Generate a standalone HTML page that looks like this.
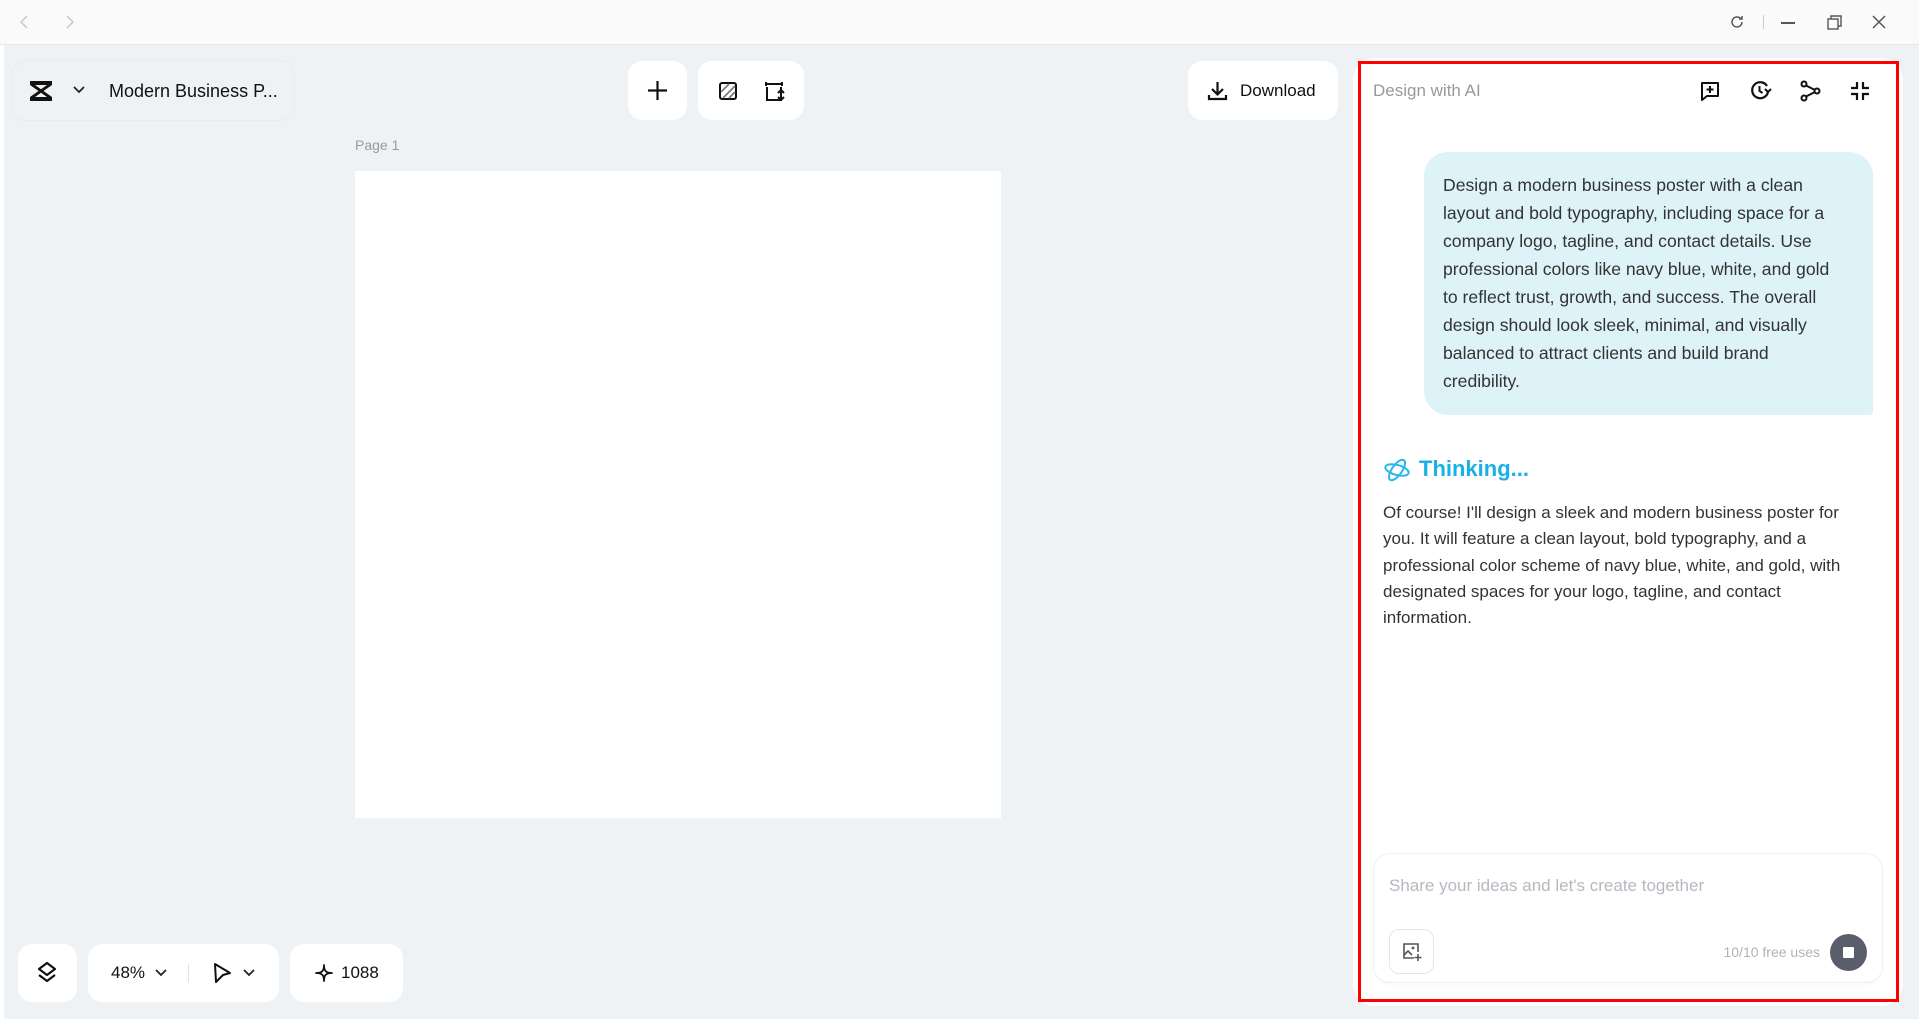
<!DOCTYPE html>
<html><head><meta charset="utf-8"><style>
*{box-sizing:border-box;margin:0;padding:0}
body{width:1919px;height:1019px;overflow:hidden;background:#eef2f5;font-family:"Liberation Sans",sans-serif;position:relative;color:#222}
.abs{position:absolute}
.top{left:0;top:0;width:1919px;height:45px;background:#fafafa;border-bottom:1px solid #e6e8ea}
.card{background:#fff;border-radius:14px;position:absolute}
svg{display:block}
.t{font-size:17.6px;line-height:28px;color:#333}
</style></head><body>
<div class="abs top">
<svg class="abs" style="left:18px;top:14px" width="12" height="16" viewBox="0 0 12 16"><path d="M9 2L3 8l6 6" fill="none" stroke="#c8c8c8" stroke-width="1.5"/></svg>
<svg class="abs" style="left:64px;top:14px" width="12" height="16" viewBox="0 0 12 16"><path d="M3 2l6 6-6 6" fill="none" stroke="#c8c8c8" stroke-width="1.5"/></svg>
<svg class="abs" style="left:1729px;top:14px" width="16" height="16" viewBox="0 0 16 16"><path d="M13 8a5 5 0 1 1-1.5-3.6M13 2v3h-3" fill="none" stroke="#555" stroke-width="1.5"/></svg>
<div class="abs" style="left:1763px;top:15px;width:1px;height:14px;background:#ccc"></div>
<div class="abs" style="left:1781px;top:22px;width:14px;height:1.5px;background:#555"></div>
<svg class="abs" style="left:1827px;top:15px" width="15" height="15" viewBox="0 0 15 15"><rect x="1" y="4" width="10" height="10" fill="none" stroke="#555" stroke-width="1.4"/><path d="M4 4V1h10v10h-3" fill="none" stroke="#555" stroke-width="1.4"/></svg>
<svg class="abs" style="left:1872px;top:15px" width="14" height="14" viewBox="0 0 14 14"><path d="M1 1l12 12M13 1L1 13" stroke="#555" stroke-width="1.5"/></svg>
</div>
<div class="abs" style="left:0;top:45px;width:4px;height:974px;background:#fff"></div>

<div class="card" style="left:12px;top:61px;width:282px;height:59px;background:#eef2f5;box-shadow:0 0 0 1px #e8ecef">
<svg class="abs" style="left:16px;top:18px" width="26" height="24" viewBox="0 0 26 24"><path d="M2 2h22v4L15.5 12 24 18v4H2v-4l8.5-6L2 6z" fill="#111"/><path d="M7 6h12l-6 4.3zM7 18h12l-6-4.3z" fill="#eef2f5"/></svg>
<svg class="abs" style="left:60px;top:24px" width="14" height="10" viewBox="0 0 14 10"><path d="M2 2l5 5 5-5" fill="none" stroke="#222" stroke-width="1.8"/></svg>
<div class="abs" style="left:97px;top:20px;font-size:18px;color:#111">Modern Business P...</div>
</div>
<div class="card" style="left:628px;top:61px;width:59px;height:59px"><svg class="abs" style="left:19px;top:19px" width="21" height="21" viewBox="0 0 21 21"><path d="M10.5 1v19M1 10.5h19" stroke="#111" stroke-width="2.2"/></svg></div>
<div class="card" style="left:698px;top:61px;width:106px;height:59px">
<svg class="abs" style="left:20px;top:20px" width="20" height="20" viewBox="0 0 20 20"><rect x="2" y="2" width="16" height="16" rx="2" fill="none" stroke="#111" stroke-width="2"/><path d="M3 11l8-8M5 17l12-12M11 17l6-6" stroke="#777" stroke-width="1.6"/></svg>
<svg class="abs" style="left:65px;top:19px" width="22" height="22" viewBox="0 0 22 22"><path d="M4 7v13h14V7M3 4h16M3 2v4M19 2v4M18 10v10M15 13l3-3 3 3M15 17l3 3 3-3" fill="none" stroke="#111" stroke-width="2"/></svg>
</div>
<div class="card" style="left:1188px;top:61px;width:150px;height:59px">
<svg class="abs" style="left:19px;top:19px" width="21" height="21" viewBox="0 0 21 21"><path d="M10.5 2v12M5 9l5.5 5.5L16 9M2 15v4h17v-4" fill="none" stroke="#111" stroke-width="2.2"/></svg>
<div class="abs" style="left:52px;top:20px;font-size:17px;color:#111">Download</div>
</div>
<div class="abs" style="left:355px;top:137px;font-size:14px;color:#999">Page 1</div>
<div class="abs" style="left:355px;top:171px;width:646px;height:647px;background:#fff"></div>

<div class="card" style="left:18px;top:944px;width:59px;height:58px"><svg class="abs" style="left:18px;top:17px" width="22" height="24" viewBox="0 0 22 24"><path d="M11 2l8 6-8 6-8-6z" fill="none" stroke="#111" stroke-width="2.2" stroke-linejoin="round"/><path d="M3 14l8 6 8-6" fill="none" stroke="#111" stroke-width="2.2" stroke-linejoin="round"/></svg></div>
<div class="card" style="left:88px;top:944px;width:191px;height:58px">
<div class="abs" style="left:23px;top:19px;font-size:17px;color:#111">48%</div>
<svg class="abs" style="left:66px;top:24px" width="14" height="10" viewBox="0 0 14 10"><path d="M2 2l5 5 5-5" fill="none" stroke="#222" stroke-width="1.8"/></svg>
<div class="abs" style="left:100px;top:20px;width:1px;height:18px;background:#e2e2e2"></div>
<svg class="abs" style="left:124px;top:18px" width="20" height="22" viewBox="0 0 20 22"><path d="M3 2l15 9-7 2-7 7z" fill="none" stroke="#111" stroke-width="2" stroke-linejoin="round"/></svg>
<svg class="abs" style="left:154px;top:24px" width="14" height="10" viewBox="0 0 14 10"><path d="M2 2l5 5 5-5" fill="none" stroke="#222" stroke-width="1.8"/></svg>
</div>
<div class="card" style="left:290px;top:944px;width:113px;height:58px">
<svg class="abs" style="left:25px;top:20px" width="18" height="18" viewBox="0 0 18 18"><path d="M9 1C9 7 11 9 17 9 11 9 9 11 9 17 9 11 7 9 1 9 7 9 9 7 9 1z" fill="none" stroke="#111" stroke-width="1.8" stroke-linejoin="round"/></svg>
<div class="abs" style="left:51px;top:19px;font-size:17px;color:#111">1088</div>
</div>

<div class="card" style="left:1353px;top:58px;width:550px;height:948px;border-radius:22px"></div>
<div class="abs" style="left:1358px;top:61px;width:541px;height:941px;border:3px solid #f00"></div>
<div class="abs" style="left:1373px;top:81px;font-size:17px;color:#999">Design with AI</div>
<svg class="abs" style="left:1699px;top:80px" width="22" height="22" viewBox="0 0 22 22"><path d="M3 3h16v13H8l-5 4z" fill="none" stroke="#111" stroke-width="2" stroke-linejoin="round"/><path d="M11 6v7M7.5 9.5h7" stroke="#111" stroke-width="2"/></svg>
<svg class="abs" style="left:1749px;top:79px" width="23" height="23" viewBox="0 0 23 23"><path d="M19 13a8 8 0 1 1-1-6" fill="none" stroke="#111" stroke-width="2.2"/><path d="M10.5 7v5l3 2M16 10l3 3 3-3" fill="none" stroke="#111" stroke-width="2"/></svg>
<svg class="abs" style="left:1799px;top:80px" width="22" height="22" viewBox="0 0 22 22"><circle cx="5" cy="4" r="2.5" fill="none" stroke="#111" stroke-width="2"/><circle cx="5" cy="18" r="2.5" fill="none" stroke="#111" stroke-width="2"/><circle cx="18" cy="11" r="2.5" fill="none" stroke="#111" stroke-width="2"/><path d="M7 5.5l9 4.5M7 16.5l9-4.5" stroke="#111" stroke-width="2"/></svg>
<svg class="abs" style="left:1850px;top:81px" width="20" height="20" viewBox="0 0 20 20"><path d="M7 1v6H1M13 1v6h6M7 19v-6H1M13 19v-6h6" fill="none" stroke="#111" stroke-width="2.2"/></svg>

<div class="abs" style="left:1424px;top:152px;width:449px;height:263px;background:#ddf3f8;border-radius:24px 24px 4px 24px"></div>
<div class="abs t" style="left:1443px;top:171px;width:405px">Design a modern business poster with a clean layout and bold typography, including space for a company logo, tagline, and contact details. Use professional colors like navy blue, white, and gold to reflect trust, growth, and success. The overall design should look sleek, minimal, and visually balanced to attract clients and build brand credibility.</div>

<svg class="abs" style="left:1383px;top:456px" width="28" height="28" viewBox="0 0 28 28"><g fill="none" stroke="#29b6f0" stroke-width="2"><ellipse cx="14" cy="14" rx="12" ry="5" transform="rotate(-55 14 14)"/><ellipse cx="14" cy="14" rx="12" ry="5" transform="rotate(15 14 14)"/></g></svg>
<div class="abs" style="left:1419px;top:456px;font-size:22px;font-weight:bold;color:#18b0e6">Thinking...</div>
<div class="abs" style="left:1383px;top:500px;width:475px;font-size:17px;line-height:26.3px;color:#333">Of course! I'll design a sleek and modern business poster for you. It will feature a clean layout, bold typography, and a professional color scheme of navy blue, white, and gold, with designated spaces for your logo, tagline, and contact information.</div>

<div class="card" style="left:1374px;top:854px;width:508px;height:128px;border-radius:16px;box-shadow:0 0 0 1px #eef0f2,0 2px 6px rgba(0,0,0,.04)">
<div class="abs" style="left:15px;top:22px;font-size:17px;color:#b5b9bf">Share your ideas and let's create together</div>
<div class="abs" style="left:15px;top:75px;width:45px;height:45px;border:1px solid #e3e5e8;border-radius:10px">
<svg class="abs" style="left:12px;top:12px" width="20" height="20" viewBox="0 0 20 20"><path d="M12 16H2V2h14v8" fill="none" stroke="#555" stroke-width="1.6"/><circle cx="11" cy="6" r="1.4" fill="#555"/><path d="M2 13l4-4 4 4M16 12v7M12.5 15.5h7" fill="none" stroke="#555" stroke-width="1.6"/></svg></div>
<div class="abs" style="right:62px;top:90px;font-size:14px;color:#b0b3b8;white-space:nowrap">10/10 free uses</div>
<div class="abs" style="left:456px;top:80px;width:37px;height:37px;border-radius:50%;background:#5a5e6a"><div class="abs" style="left:13px;top:13px;width:11px;height:11px;background:#fff;border-radius:1px"></div></div>
</div>
</body></html>
